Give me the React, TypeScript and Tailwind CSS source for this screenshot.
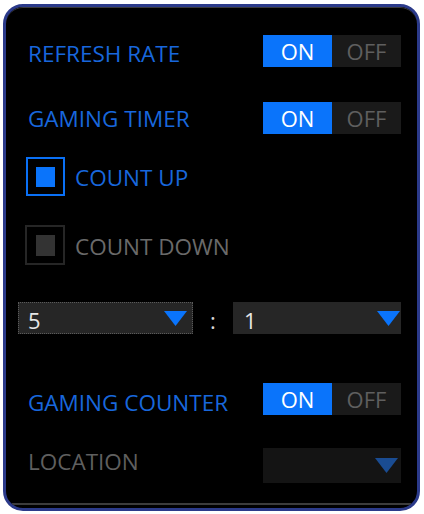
import React from "react";

const font = { fontFamily: '"Open Sans", "Noto Sans", sans-serif' };

function Toggle() {
  return (
    <div className="flex h-[32px] w-[138px] shrink-0 leading-none">
      <div className="flex w-[69px] items-center justify-center bg-[#0a74fb] text-[22px] text-white">ON</div>
      <div className="flex w-[69px] items-center justify-center bg-[#1a1a1a] text-[22px] text-[#5f5f5f]">OFF</div>
    </div>
  );
}

function Tri({ color }: { color: string }) {
  return (
    <svg width="23" height="15" viewBox="0 0 23 15">
      <polygon points="0,0 23,0 11.5,15" fill={color} />
    </svg>
  );
}

export default function App() {
  return (
    <div className="h-[514px] w-[424px] bg-white pl-[3px] pr-[4px] pt-[4px] pb-[3px]" style={font}>
      <div className="h-full w-full overflow-hidden rounded-[20px] border-[3px] border-[#2b3a8a] bg-black">
        <div className="flex h-full flex-col rounded-[17px] border-t border-[#3a3a3a] leading-none">
          {/* Refresh rate */}
          <div className="mt-[27px] flex h-[32px] items-center justify-between pl-[22px] pr-[16px]">
            <span className="translate-y-[3px] text-[22.5px] text-[#1867dc]">REFRESH RATE</span>
            <Toggle />
          </div>
          {/* Gaming timer */}
          <div className="mt-[35px] flex h-[32px] items-center justify-between pl-[22px] pr-[16px]">
            <span className="translate-y-[1px] text-[22.5px] text-[#1867dc]">GAMING TIMER</span>
            <Toggle />
          </div>
          {/* Count up */}
          <div className="mt-[23px] flex h-[39px] items-center pl-[20px]">
            <div className="flex h-[39px] w-[39px] items-center justify-center border-2 border-[#0a70f5]">
              <div className="h-[20px] w-[19px] bg-[#0a74fb]" />
            </div>
            <span className="ml-[10px] translate-y-[2px] text-[22.5px] text-[#1867dc]">COUNT UP</span>
          </div>
          {/* Count down */}
          <div className="mt-[29px] flex h-[40px] items-center pl-[19px]">
            <div className="flex h-[40px] w-[40px] items-center justify-center border-2 border-[#262626]">
              <div className="h-[21px] w-[19px] bg-[#333333]" />
            </div>
            <span className="ml-[10px] translate-y-[2px] text-[22.5px] text-[#6a6a6a]">COUNT DOWN</span>
          </div>
          {/* Dropdowns */}
          <div className="mt-[37px] flex h-[32px] items-center pl-[12px] pr-[16px]">
            <div className="flex h-[32px] w-[175px] items-center justify-between border border-dotted border-[#5a5a5a] bg-[#262626] pl-[9px] pr-[5px]">
              <span className="translate-y-[2px] text-[22px] text-[#e6e6e6]">5</span>
              <Tri color="#0a74fb" />
            </div>
            <span className="flex w-[40px] translate-y-[2px] justify-center text-[22px] text-[#d8d8d8]">:</span>
            <div className="flex h-[32px] flex-1 items-center justify-between bg-[#262626] pl-[11px] pr-[1px]">
              <span className="translate-y-[2px] text-[22px] text-[#e6e6e6]">1</span>
              <Tri color="#0a74fb" />
            </div>
          </div>
          {/* Gaming counter */}
          <div className="mt-[49px] flex h-[32px] items-center justify-between pl-[22px] pr-[16px]">
            <span className="translate-y-[4px] text-[22.5px] text-[#1867dc]">GAMING COUNTER</span>
            <Toggle />
          </div>
          {/* Location */}
          <div className="mt-[33px] flex h-[35px] items-center justify-between pl-[22px] pr-[16px]">
            <span className="-translate-y-[3px] text-[22.5px] text-[#5f5f5f]">LOCATION</span>
            <div className="flex h-[35px] w-[138px] items-center justify-end bg-[#141414] pr-[3px]">
              <Tri color="#1a4c92" />
            </div>
          </div>
          <div className="mx-[6px] mt-[20px] h-[2px] bg-[#3c3c3c]" />
        </div>
      </div>
    </div>
  );
}
